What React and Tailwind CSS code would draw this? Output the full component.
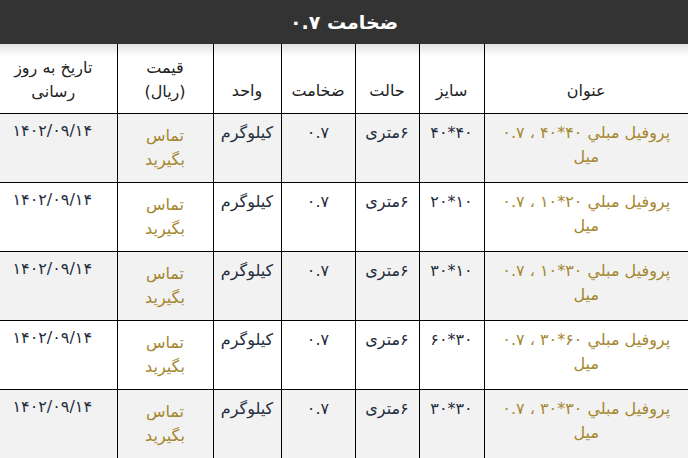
import React from "react";

const rows = [
  { title: "پروفیل مبلي ۴۰*۴۰ ، ۰.۷ میل", size: "۴۰*۴۰" },
  { title: "پروفیل مبلي ۲۰*۱۰ ، ۰.۷ میل", size: "۱۰*۲۰" },
  { title: "پروفیل مبلي ۳۰*۱۰ ، ۰.۷ میل", size: "۱۰*۳۰" },
  { title: "پروفیل مبلي ۶۰*۳۰ ، ۰.۷ میل", size: "۳۰*۶۰" },
  { title: "پروفیل مبلي ۳۰*۳۰ ، ۰.۷ میل", size: "۳۰*۳۰" },
];

export default function App() {
  const font = { fontFamily: '"DejaVu Sans", sans-serif' };
  return (
    <div dir="rtl" className="w-[688px] h-[458px] overflow-hidden bg-white" style={font}>
      <div className="h-[44px] bg-[#333333] flex items-center justify-center text-white font-bold text-[19px]">
        ضخامت ۰.۷
      </div>
      <table className="w-[688px] table-fixed border-collapse text-[16px] leading-[24px]">
        <colgroup>
          <col className="w-[204px]" />
          <col className="w-[65px]" />
          <col className="w-[64px]" />
          <col className="w-[74px]" />
          <col className="w-[68px]" />
          <col className="w-[96px]" />
          <col className="w-[117px]" />
        </colgroup>
        <thead>
          <tr className="h-[69px] bg-gradient-to-b from-[#e2e2e2] to-white to-[18%] text-[#222]">
            <th className="font-normal align-bottom pb-[10px] px-1 border-b border-l border-black">عنوان</th>
            <th className="font-normal align-bottom pb-[10px] px-1 border-b border-l border-black">سایز</th>
            <th className="font-normal align-bottom pb-[10px] px-1 border-b border-l border-black">حالت</th>
            <th className="font-normal align-bottom pb-[10px] px-1 border-b border-l border-black">ضخامت</th>
            <th className="font-normal align-bottom pb-[10px] px-1 border-b border-l border-black">واحد</th>
            <th className="font-normal align-bottom pb-[9px] px-1 border-b border-l border-black">قیمت<br />(ریال)</th>
            <th className="font-normal align-bottom pb-[9px] pl-0 pr-[10px] border-b border-black">تاریخ به روز<br />رسانی</th>
          </tr>
        </thead>
        <tbody>
          {rows.map((r, i) => (
            <tr key={i} className={"h-[69px] " + (i % 2 === 0 ? "bg-[#f2f2f2]" : "bg-white")}>
              <td className="align-top pt-[7px] px-[12px] text-center text-[#a5872f] border-b border-l border-black">{r.title}</td>
              <td className="align-top pt-[7px] px-1 text-center text-[#1f2d3d] border-b border-l border-black">{r.size}</td>
              <td className="align-top pt-[7px] px-1 text-center text-[#1f2d3d] border-b border-l border-black">۶متری</td>
              <td className="align-top pt-[7px] px-1 text-center text-[#1f2d3d] border-b border-l border-black">۰.۷</td>
              <td className="align-top pt-[7px] px-1 text-center text-[#1f2d3d] border-b border-l border-black">کیلوگرم</td>
              <td className="align-top pt-[10px] px-1 text-center text-[#a5872f] border-b border-l border-black">تماس<br />بگیرید</td>
              <td className="align-top pt-[5px] pl-0 pr-[12px] text-center text-[#1f2d3d] border-b border-black">۱۴۰۲/۰۹/۱۴</td>
            </tr>
          ))}
        </tbody>
      </table>
    </div>
  );
}
